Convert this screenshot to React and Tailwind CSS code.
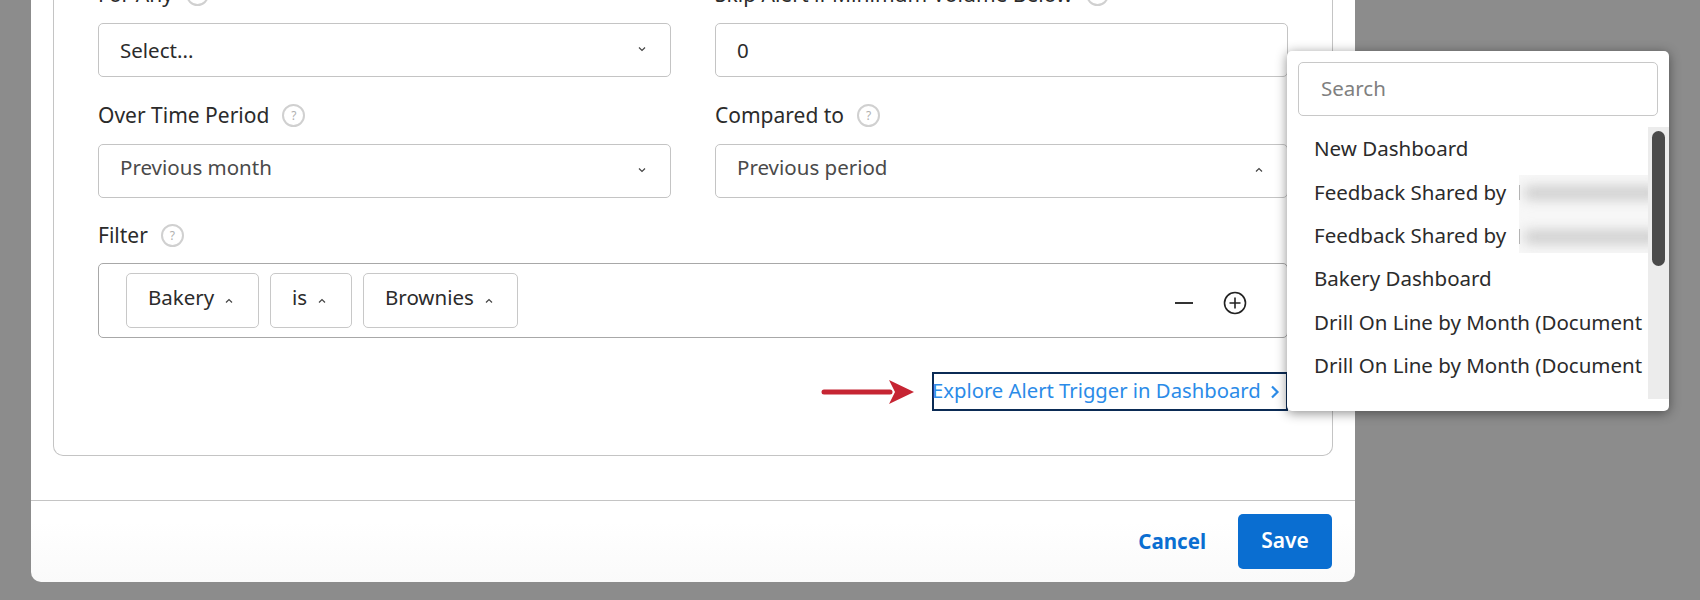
const font = "font-['Noto_Sans','Open_Sans',sans-serif]";

function Help() {
  return (
    <span className="ml-[13px] inline-flex h-[23px] w-[23px] shrink-0 items-center justify-center rounded-full border-2 border-[#d0d0d0] text-[12px] text-[#b0b0b0]">
      ?
    </span>
  );
}

function Caret({ up, className }) {
  return (
    <svg width="8" height="6" viewBox="0 0 8 6" fill="none" stroke="#444" strokeWidth="1.2" className={className}>
      <path d={up ? "M1 4.5 4 1.5l3 3" : "M1 1.5 4 4.5l3-3"} />
    </svg>
  );
}

function Select({ value, up, muted, first }) {
  return (
    <div className="flex h-[54px] items-center justify-between rounded-[5px] border border-[#c4c4c4] bg-white pr-[24px] pl-[21px]">
      <span className={`${first ? "" : "-mt-[7px]"} ${muted ? "text-[#4a4a4a]" : "text-[#2b2b2b]"}`}>{value}</span>
      <Caret up={up} className="-mt-[2px]" />
    </div>
  );
}

function Label({ text, className }) {
  return (
    <div className={`flex h-[26px] items-center pb-[1px] text-[21px] text-[#2b2b2b] ${className}`}>
      {text}
      <Help />
    </div>
  );
}

function Chip({ text, className }) {
  return (
    <div className={`flex h-[55px] items-center rounded-[5px] border border-[#c8c8c8] pl-[21px] ${className}`}>
      <span className="-mt-[6px] text-[#2b2b2b]">{text}</span>
      <Caret up className="ml-[11px]" />
    </div>
  );
}

const dashboards = [
  "New Dashboard",
  "Feedback Shared by",
  "Feedback Shared by",
  "Bakery Dashboard",
  "Drill On Line by Month (Document",
  "Drill On Line by Month (Document",
];

function DashboardMenu() {
  return (
    <div className="absolute top-[51px] left-[1287px] z-10 h-[360px] w-[382px] rounded-[5px] bg-white pt-[11px] shadow-[0_2px_12px_rgba(0,0,0,0.45)]">
      <div className="mx-[11px] flex h-[54px] items-center rounded-[5px] border border-[#c8c8c8] pb-[2px] pl-[22px] text-[#808080]">
        Search
      </div>
      <div className="mt-[11px] flex h-[272px] overflow-hidden">
        <div className="relative w-[361px] overflow-hidden pl-[27px]">
          {dashboards.map((name, i) => (
            <div key={i} className="flex h-[43.4px] items-center whitespace-nowrap text-[#2b2b2b]">
              {name}
            </div>
          ))}
          {/* names are blurred out in the source picture */}
          <div className="absolute top-[48px] left-[232px] h-[78px] w-[129px] overflow-hidden bg-[#f7f7f7]">
            <div className="mt-[11px] -mr-[10px] ml-[6px] h-[14px] bg-[#cfcfcf] blur-[6px]" />
            <div className="mt-[30px] -mr-[10px] ml-[6px] h-[14px] bg-[#cfcfcf] blur-[6px]" />
            <div className="absolute top-[10px] left-0 h-[15px] w-[1px] bg-[#b4b4b4]" />
            <div className="absolute top-[54px] left-0 h-[15px] w-[1px] bg-[#b4b4b4]" />
          </div>
        </div>
        <div className="flex w-[21px] justify-center bg-[#ececec] pt-[4px]">
          <div className="h-[135px] w-[13px] rounded-full bg-[#4a4a4a]" />
        </div>
      </div>
    </div>
  );
}

export default function App() {
  return (
    <div className={`relative flex h-[600px] w-[1700px] flex-col justify-end overflow-hidden bg-[#8c8c8c] pb-[18px] pl-[31px] text-[20.5px] ${font}`}>
      <div className="w-[1324px] rounded-b-[10px] bg-gradient-to-b from-white from-90% to-[#fafafa]">
        <div className="mx-[22px] rounded-b-[10px] border border-t-0 border-[#c4c4c4] px-[44px] pb-[44px]">
          <div className="grid grid-cols-2 gap-x-[44px]">
            <div>
              <Label text="For Any" className="mb-[15px]" />
              <Select value="Select..." first />
            </div>
            <div>
              <Label text="Skip Alert if Minimum Volume Below" className="mb-[15px]" />
              <div className="flex h-[54px] items-center rounded-[5px] border border-[#c4c4c4] pl-[21px] text-[#2b2b2b]">
                <span>0</span>
              </div>
            </div>
            <div>
              <Label text="Over Time Period" className="mt-[26px] mb-[15px]" />
              <Select value="Previous month" muted />
            </div>
            <div>
              <Label text="Compared to" className="mt-[26px] mb-[15px]" />
              <Select value="Previous period" up muted />
            </div>
          </div>

          <Label text="Filter" className="mt-[25px] mb-[14px]" />
          <div className="flex h-[75px] items-center rounded-[5px] border border-[#a8a8a8] pr-[40px] pl-[27px]">
            <div className="flex gap-[11px]">
              <Chip text="Bakery" className="w-[133px]" />
              <Chip text="is" className="w-[82px]" />
              <Chip text="Brownies" className="w-[155px]" />
            </div>
            <div className="mt-[4px] ml-auto flex items-center gap-[30px]">
              <div className="h-[2px] w-[18px] bg-[#333]" />
              <svg width="24" height="24" viewBox="0 0 24 24" fill="none" stroke="#222" strokeWidth="1.6">
                <circle cx="12" cy="12" r="10.5" />
                <path d="M12 6.5v11M6.5 12h11" />
              </svg>
            </div>
          </div>

          <div className="mt-[34px] flex items-center justify-end">
            <svg width="93" height="26" viewBox="0 0 93 26" className="mr-[18px]">
              <path d="M3 13h66" stroke="#c62533" strokeWidth="5" strokeLinecap="round" />
              <path d="M68 1l25 12-25 12 6-12z" fill="#c62533" />
            </svg>
            <a className="flex h-[39px] w-[356px] items-center border-2 border-[#0b2b55] text-[20.25px] text-[#2b8be8]">
              <span className="-mt-[2px] -ml-[2px] whitespace-nowrap">Explore Alert Trigger in Dashboard</span>
              <svg width="10" height="14" viewBox="0 0 10 14" fill="none" stroke="#2b8be8" strokeWidth="2.2" className="ml-[9px]">
                <path d="M2 1.5 7.5 7 2 12.5" />
              </svg>
            </a>
          </div>
        </div>

        <div className="mt-[44px] flex h-[82px] items-start justify-end gap-[32px] border-t border-[#c4c4c4] pt-[13px] pr-[23px]">
          <button className="mt-[12px] text-[20.5px] font-bold text-[#0a6ed1]">Cancel</button>
          <button className="h-[55px] w-[94px] rounded-[5px] bg-[#0a6ed1] pb-[2px] text-[21px] font-semibold text-white">Save</button>
        </div>
      </div>

      <DashboardMenu />
    </div>
  );
}
